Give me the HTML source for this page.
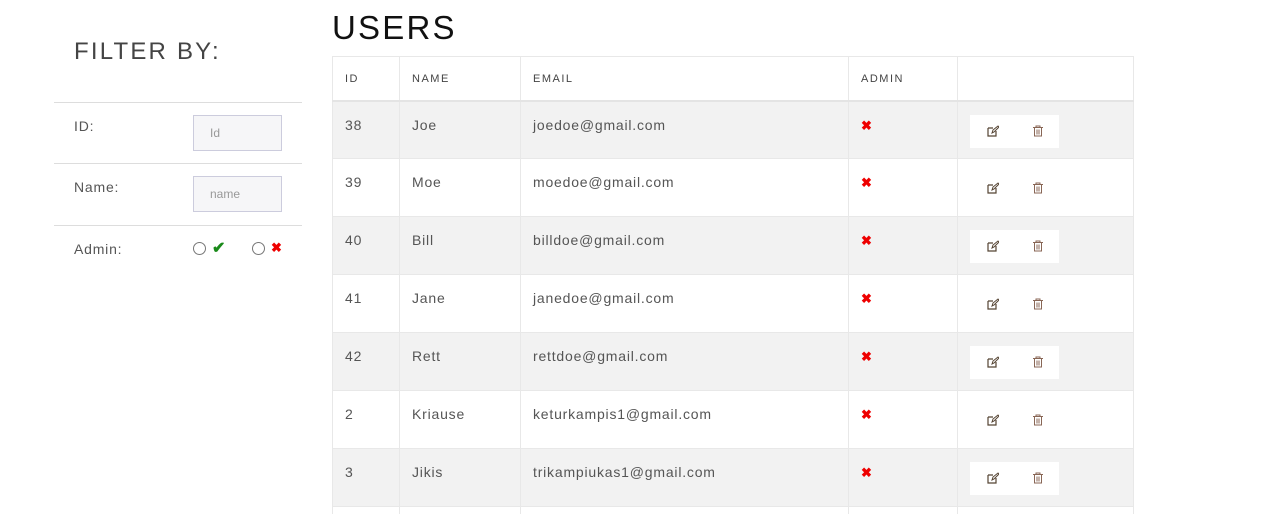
<!DOCTYPE html>
<html><head><meta charset="utf-8"><style>
*{box-sizing:border-box;margin:0;padding:0}
html,body{width:1262px;height:514px;overflow:hidden}
body{background:#fff;font-family:"Liberation Sans",sans-serif;color:#555;letter-spacing:0.8px;position:relative}
.abs{position:absolute}
h1{position:absolute;left:332px;top:9px;font-size:33px;font-weight:normal;letter-spacing:2.2px;color:#111}
h2{position:absolute;left:74px;top:38px;font-size:24px;font-weight:normal;letter-spacing:2.2px;color:#444}
.hl{position:absolute;left:54px;width:248px;height:1px;background:#ddd}
.lbl{position:absolute;left:74px;font-size:14px;color:#555}
.inp{position:absolute;left:193px;width:89px;height:36px;border:1px solid #ccd;background:#f6f6f8;font-size:12px;color:#999;padding:10px 0 0 16px;letter-spacing:0}
.radio{position:absolute;width:13px;height:13px;border:1px solid #777;border-radius:50%}
table{position:absolute;left:332px;top:56px;border-collapse:collapse;width:802px}
td,th{border:1px solid #e8e8e8;text-align:left;vertical-align:top;font-size:14px;padding:15px 12px 0;height:58px}
th{font-size:11px;font-weight:normal;height:44px;padding-top:16px;letter-spacing:1.5px;color:#444;border-bottom:2px solid #e4e4e4}
tr.g td{background:#f2f2f2}
.x{color:#e00;font-weight:bold;font-size:13px}
.btns{display:block;width:89px;height:33px;margin-top:-2px;position:relative}
tr.g .btns{background:#fff}
svg{position:absolute;top:10px}
</style></head><body>
<h1>USERS</h1>
<h2>FILTER BY:</h2>
<div class="hl" style="top:102px"></div>
<div class="hl" style="top:163px"></div>
<div class="hl" style="top:225px"></div>
<div class="lbl" style="top:118px">ID:</div>
<div class="inp" style="top:115px">Id</div>
<div class="lbl" style="top:179px">Name:</div>
<div class="inp" style="top:176px">name</div>
<div class="lbl" style="top:241px">Admin:</div>
<div class="radio" style="left:193px;top:242px"></div>
<div class="abs" style="left:212px;top:238px;color:#1a8a1a;font-size:16px;font-weight:bold">✔</div>
<div class="radio" style="left:252px;top:242px"></div>
<div class="abs" style="left:271px;top:240px;color:#e00;font-size:13px;font-weight:bold">✖</div>
<table>
<tr><th style="width:67px">ID</th><th style="width:121px">NAME</th><th style="width:328px">EMAIL</th><th style="width:109px">ADMIN</th><th></th></tr>
<tr class="g"><td>38</td><td>Joe</td><td>joedoe@gmail.com</td><td><span class="x">✖</span></td><td><span class="btns"><svg style="left:17px" width="12" height="12" viewBox="0 0 12 12"><path d="M1 3h5M1 3v8h8V6" stroke="#543" fill="none" stroke-width="1.2"/><path d="M5 8l1-3 5-4 1 1-5 5z" stroke="#543" fill="none"/></svg><svg style="left:63px" width="10" height="12" viewBox="0 0 10 12"><path d="M0 2.5h10M3 2.5V1h4v1.5M1.5 3v8h7V3M4 4.5v5M6 4.5v5" stroke="#865" fill="none"/></svg></span></td></tr>
<tr><td>39</td><td>Moe</td><td>moedoe@gmail.com</td><td><span class="x">✖</span></td><td><span class="btns"><svg style="left:17px" width="12" height="12" viewBox="0 0 12 12"><path d="M1 3h5M1 3v8h8V6" stroke="#543" fill="none" stroke-width="1.2"/><path d="M5 8l1-3 5-4 1 1-5 5z" stroke="#543" fill="none"/></svg><svg style="left:63px" width="10" height="12" viewBox="0 0 10 12"><path d="M0 2.5h10M3 2.5V1h4v1.5M1.5 3v8h7V3M4 4.5v5M6 4.5v5" stroke="#865" fill="none"/></svg></span></td></tr>
<tr class="g"><td>40</td><td>Bill</td><td>billdoe@gmail.com</td><td><span class="x">✖</span></td><td><span class="btns"><svg style="left:17px" width="12" height="12" viewBox="0 0 12 12"><path d="M1 3h5M1 3v8h8V6" stroke="#543" fill="none" stroke-width="1.2"/><path d="M5 8l1-3 5-4 1 1-5 5z" stroke="#543" fill="none"/></svg><svg style="left:63px" width="10" height="12" viewBox="0 0 10 12"><path d="M0 2.5h10M3 2.5V1h4v1.5M1.5 3v8h7V3M4 4.5v5M6 4.5v5" stroke="#865" fill="none"/></svg></span></td></tr>
<tr><td>41</td><td>Jane</td><td>janedoe@gmail.com</td><td><span class="x">✖</span></td><td><span class="btns"><svg style="left:17px" width="12" height="12" viewBox="0 0 12 12"><path d="M1 3h5M1 3v8h8V6" stroke="#543" fill="none" stroke-width="1.2"/><path d="M5 8l1-3 5-4 1 1-5 5z" stroke="#543" fill="none"/></svg><svg style="left:63px" width="10" height="12" viewBox="0 0 10 12"><path d="M0 2.5h10M3 2.5V1h4v1.5M1.5 3v8h7V3M4 4.5v5M6 4.5v5" stroke="#865" fill="none"/></svg></span></td></tr>
<tr class="g"><td>42</td><td>Rett</td><td>rettdoe@gmail.com</td><td><span class="x">✖</span></td><td><span class="btns"><svg style="left:17px" width="12" height="12" viewBox="0 0 12 12"><path d="M1 3h5M1 3v8h8V6" stroke="#543" fill="none" stroke-width="1.2"/><path d="M5 8l1-3 5-4 1 1-5 5z" stroke="#543" fill="none"/></svg><svg style="left:63px" width="10" height="12" viewBox="0 0 10 12"><path d="M0 2.5h10M3 2.5V1h4v1.5M1.5 3v8h7V3M4 4.5v5M6 4.5v5" stroke="#865" fill="none"/></svg></span></td></tr>
<tr><td>2</td><td>Kriause</td><td>keturkampis1@gmail.com</td><td><span class="x">✖</span></td><td><span class="btns"><svg style="left:17px" width="12" height="12" viewBox="0 0 12 12"><path d="M1 3h5M1 3v8h8V6" stroke="#543" fill="none" stroke-width="1.2"/><path d="M5 8l1-3 5-4 1 1-5 5z" stroke="#543" fill="none"/></svg><svg style="left:63px" width="10" height="12" viewBox="0 0 10 12"><path d="M0 2.5h10M3 2.5V1h4v1.5M1.5 3v8h7V3M4 4.5v5M6 4.5v5" stroke="#865" fill="none"/></svg></span></td></tr>
<tr class="g"><td>3</td><td>Jikis</td><td>trikampiukas1@gmail.com</td><td><span class="x">✖</span></td><td><span class="btns"><svg style="left:17px" width="12" height="12" viewBox="0 0 12 12"><path d="M1 3h5M1 3v8h8V6" stroke="#543" fill="none" stroke-width="1.2"/><path d="M5 8l1-3 5-4 1 1-5 5z" stroke="#543" fill="none"/></svg><svg style="left:63px" width="10" height="12" viewBox="0 0 10 12"><path d="M0 2.5h10M3 2.5V1h4v1.5M1.5 3v8h7V3M4 4.5v5M6 4.5v5" stroke="#865" fill="none"/></svg></span></td></tr>
<tr><td></td><td></td><td></td><td></td><td></td></tr>
</table>
</body></html>
